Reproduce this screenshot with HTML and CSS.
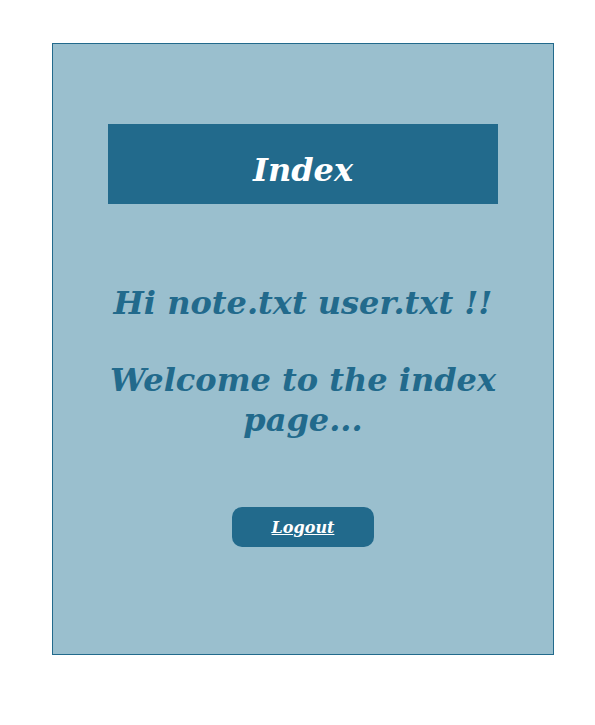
FILE: index.html
```html
<!DOCTYPE html>
<html>
<head>
<meta charset="utf-8">
<link rel="stylesheet" href="styles.css">
</head>
<body>
<div class="card">
  <div class="banner"><h1 class="title">Index</h1></div>
  <h2 class="msg">Hi note.txt user.txt !!</h2>
  <h2 class="msg msg2">Welcome to the index page...</h2>
  <a class="btn" href="#">Logout</a>
</div>
</body>
</html>
```
FILE: styles.css
```css
html, body {
  margin: 0;
  padding: 0;
  background: #ffffff;
}
body {
  font-family: "DejaVu Serif", serif;
  font-weight: bold;
  font-style: italic;
}
.card {
  box-sizing: border-box;
  width: 502px;
  height: 612px;
  margin: 43px 0 0 52px;
  border: 1px solid #226a8c;
  background: #9abfce;
  display: flex;
  flex-direction: column;
  align-items: center;
  padding-top: 80px;
}
.banner {
  width: 390px;
  height: 80px;
  background: #226a8c;
  display: flex;
  align-items: center;
  justify-content: center;
}
.title {
  margin: 0;
  color: #ffffff;
  font-size: 32px;
  line-height: 1;
  padding-top: 12px;
}
.msg {
  margin: 79px 0 0;
  color: #226a8c;
  font-size: 32px;
  line-height: 40px;
  text-align: center;
  width: 400px;
}
.msg2 {
  margin-top: 37px;
}
.btn {
  margin-top: 67px;
  width: 142px;
  height: 40px;
  border-radius: 10px;
  background: #226a8c;
  color: #ffffff;
  font-size: 16px;
  text-decoration: underline;
  display: flex;
  align-items: center;
  justify-content: center;
}
```
